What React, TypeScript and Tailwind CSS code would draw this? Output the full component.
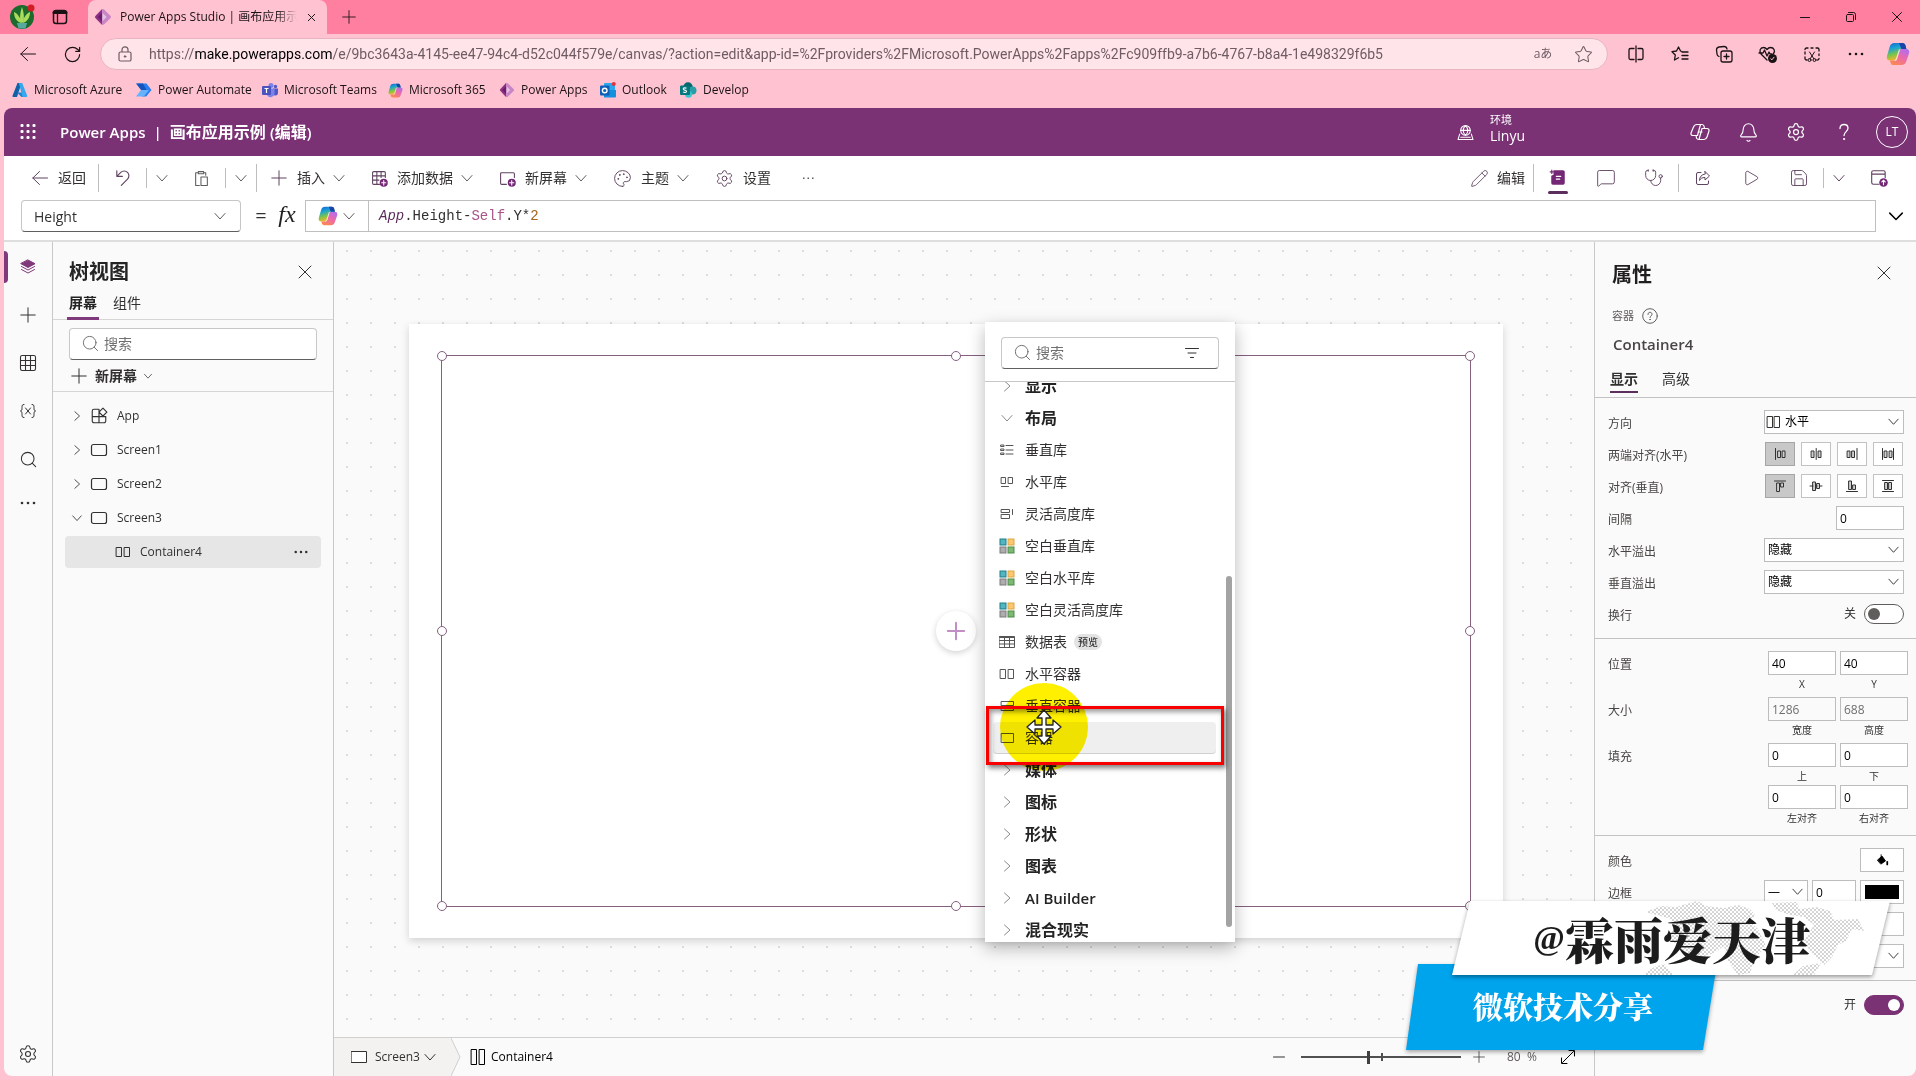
import type { ReactNode } from 'react'
import {
  Bell, Grid3x3, MessageSquare, Palette, Pencil, Play,
  Plus, RotateCw, Save, Search, Settings, Star, Stethoscope, X,
} from 'lucide-react'

/* ---------- small icons ---------- */

function Svg({ size = 16, box = 16, className = '', children }: { size?: number; box?: number; className?: string; children: ReactNode }) {
  return (
    <svg width={size} height={size} viewBox={`0 0 ${box} ${box}`} fill="none" stroke="currentColor" strokeWidth={1}
      strokeLinecap="round" strokeLinejoin="round" className={`shrink-0 ${className}`} aria-hidden="true">
      {children}
    </svg>
  )
}

const ChevDown = ({ size = 14, className = '' }: { size?: number; className?: string }) => (
  <Svg size={size} box={14} className={className}><path d="M2 4.500 7 10l5-5.500" /></Svg>
)
const ChevRight = ({ size = 14, className = '' }: { size?: number; className?: string }) => (
  <Svg size={size} box={14} className={className}><path d="M4.500 2 10 7l-5.500 5" /></Svg>
)
const BackArrow = ({ className = '' }: { className?: string }) => (
  <Svg className={className}><path d="M15.500 8H.8M7.500 1.500.8 8l6.700 6.500" /></Svg>
)
const PlusIcon = ({ size = 16, className = '' }: { size?: number; className?: string }) => (
  <Svg size={size} className={className}><path d="M8 .8v14.400M.8 8h14.400" /></Svg>
)
const Dots = ({ className = '' }: { className?: string }) => (
  <Svg className={className}><g fill="currentColor" stroke="none"><circle cx="2" cy="8" r="1.300" /><circle cx="8" cy="8" r="1.300" /><circle cx="14" cy="8" r="1.300" /></g></Svg>
)
const ScreenIcon = () => <Svg size={18} box={18}><rect x="1.500" y="3.500" width="15" height="11" rx="2" strokeWidth={1.200} /></Svg>
const ColumnsIcon = ({ size = 16 }: { size?: number }) => (
  <Svg size={size}><rect x="1.500" y="3.500" width="5" height="9" /><rect x="9.500" y="3.500" width="5" height="9" /></Svg>
)
const TallColumns = () => <Svg><path d="M1.500.5h5v15h-5zM9.500.5h5v15h-5z" /></Svg>

function CopilotIcon({ size = 16 }: { size?: number }) {
  return (
    <svg width={size} height={size} viewBox="0 0 24 24" className="shrink-0" aria-hidden="true">
      <defs>
        <linearGradient id="cpA" x1="0" y1="0" x2="0.3" y2="1">
          <stop offset="0" stopColor="#1b5fd0" /><stop offset="0.35" stopColor="#16a2d8" /><stop offset="0.7" stopColor="#7fc447" /><stop offset="1" stopColor="#f5b62b" />
        </linearGradient>
        <linearGradient id="cpB" x1="0.8" y1="0" x2="0.2" y2="1">
          <stop offset="0" stopColor="#b06df0" /><stop offset="0.5" stopColor="#ee6aa6" /><stop offset="1" stopColor="#fb8a4c" />
        </linearGradient>
      </defs>
      <path d="M8.500 1h8c1.700 0 2.600 1 3 2.600l.9 3.400h-4.400c-1.500 0-2.400.8-2.800 2.300l-2 7c-.5 1.700-1.400 2.200-3 2.200H4C1.300 18.500.2 16.800 1 14L3.800 4.500C4.500 2.200 6 1 8.500 1z" fill="url(#cpA)" />
      <path d="M15.500 23h-8c-1.700 0-2.600-1-3-2.600l-.6-1.900h4.300c1.600 0 2.500-.5 3-2.200l2-7c.4-1.500 1.300-2.300 2.800-2.300h4c2.700 0 3.800 1.700 3 4.500l-2.800 8C19.500 21.800 18 23 15.500 23z" fill="url(#cpB)" />
      <path d="M13 1h3.500c1.700 0 2.600 1 3 2.600l.9 3.400h-3.600c-1.500 0-1.900-.8-2.300-2.300z" fill="#1a43a8" />
      <path d="M13.500 7.500 10.500 17c-.4 1-.8 1.500-1.800 1.500" fill="none" stroke="#fff" strokeOpacity="0.7" strokeWidth="1.200" />
    </svg>
  )
}

const PowerAppsIcon = ({ size = 17 }: { size?: number }) => (
  <svg width={size} height={size} viewBox="0 0 20 20" className="shrink-0" aria-hidden="true">
    <path d="M9 1 1.500 9a1.500 1.500 0 0 0 0 2L9 19z" fill="#8d2f86" />
    <path d="M9 1v18l2-.6 7.500-7.400a1.500 1.500 0 0 0 0-2L11 1.500z" fill="#c985c5" />
    <path d="M9 5v10l5-5z" fill="#e6bfe6" />
    <path d="M9 5v10l-5-5z" fill="#6b1f69" />
  </svg>
)
const AzureIcon = () => (
  <svg width="16" height="16" viewBox="0 0 16 16" className="shrink-0" aria-hidden="true">
    <path d="M5.500 1h4L5 15H1.500a1 1 0 0 1-1-1.300z" fill="#1161a8" />
    <path d="M5 10.500h7l-1 4.500H9.500z" fill="#1c7fd0" />
    <path d="M6.800 1h3.400l5 12.700A1 1 0 0 1 14.200 15h-3.700z" fill="#35a8ee" />
  </svg>
)
const AutomateIcon = () => (
  <svg width="17" height="16" viewBox="0 0 17 16" className="shrink-0" aria-hidden="true">
    <path d="M1 1.500h10.500L16.500 8l-5.300 6.500H7L10 8 6 3z" fill="#2a7fee" />
    <path d="M1 1.500h7L11.500 8H6z" fill="#1454c0" />
    <path d="M1 14.500 6 8h8l-5.200 6.500z" fill="#66b1fb" />
  </svg>
)
const TeamsIcon = () => (
  <svg width="16" height="16" viewBox="0 0 16 16" className="shrink-0" aria-hidden="true">
    <circle cx="9" cy="3.500" r="2.500" fill="#7b83eb" /><circle cx="13.500" cy="4.500" r="1.700" fill="#5059c9" />
    <path d="M11 6.500h5v4.500a2.600 2.600 0 0 1-5 1z" fill="#5059c9" /><path d="M5 6.500h7.500V12a4 4 0 0 1-7.500 1z" fill="#7b83eb" />
    <rect x="0" y="4" width="9" height="9" rx="1" fill="#4b53bc" /><path d="M2.500 6.500h4M4.500 6.500v4.500" stroke="#fff" strokeWidth="1.200" />
  </svg>
)
const OutlookIcon = () => (
  <svg width="16" height="16" viewBox="0 0 16 16" className="shrink-0" aria-hidden="true">
    <rect x="4" y="1" width="11" height="13" rx="1" fill="#28a8ea" /><path d="M4 8h12v6.500a1 1 0 0 1-1 1H4z" fill="#1490df" />
    <rect x="0" y="3.500" width="9.500" height="10" rx="1" fill="#0f5fb5" /><circle cx="4.700" cy="8.500" r="2.300" fill="none" stroke="#fff" strokeWidth="1.400" />
    <circle cx="13.800" cy="2" r="2" fill="#e0333c" />
  </svg>
)
const SharePointIcon = () => (
  <svg width="17" height="16" viewBox="0 0 17 16" className="shrink-0" aria-hidden="true">
    <circle cx="8" cy="5" r="4.700" fill="#03676c" /><circle cx="12.500" cy="8.500" r="4" fill="#2b9da5" /><circle cx="8.500" cy="12.300" r="3.500" fill="#37c6d0" />
    <rect x="0" y="3.500" width="10" height="9.500" rx="1" fill="#06777d" />
    <path d="M6.500 6.300c-1-.7-3.300-.7-3.300.6 0 1.500 3.300.9 3.300 2.400 0 1.400-2.300 1.400-3.400.6" fill="none" stroke="#fff" strokeWidth="1.100" />
  </svg>
)

/* ---------- browser chrome ---------- */

const bookmarks = [
  { label: 'Microsoft Azure', icon: <AzureIcon />, w: 'w-[123px]' },
  { label: 'Power Automate', icon: <AutomateIcon />, w: 'w-[127px]' },
  { label: 'Microsoft Teams', icon: <TeamsIcon />, w: 'w-[126px]' },
  { label: 'Microsoft 365', icon: <CopilotIcon size={15} />, w: 'w-[111px]' },
  { label: 'Power Apps', icon: <PowerAppsIcon size={16} />, w: 'w-[101px]' },
  { label: 'Outlook', icon: <OutlookIcon />, w: 'w-[80px]' },
  { label: 'Develop', icon: <SharePointIcon />, w: 'w-[80px]' },
]

function IconButton({ label, className = '', children }: { label: string; className?: string; children: ReactNode }) {
  return <button type="button" aria-label={label} className={`flex shrink-0 items-center justify-center ${className}`}>{children}</button>
}

function Browser() {
  return (
    <header className="shrink-0 text-xs text-[#1b1216]">
      <div className="flex h-[34px] items-stretch bg-[#ff7fa0]">
        <IconButton label="个人资料" className="w-11">
          <svg width="26" height="26" viewBox="0 0 26 26" aria-hidden="true">
            <circle cx="13" cy="13" r="12" fill="#1c6b2c" />
            <path d="M13 20C10 15 11 9 13 3c2 6 3 12 0 17zM12 19C7 17 5 13 5 8c4 2 7 6 7 11zM14 19c5-2 7-6 7-11-4 2-7 6-7 11z" fill="#a9dc5c" />
            <path d="M8 19h10l-1.500 5.500h-7z" fill="#56a9a0" /><circle cx="22" cy="4" r="3.500" fill="#d31d24" />
          </svg>
        </IconButton>
        <IconButton label="工作区" className="w-8">
          <Svg><rect x="1.500" y="1.500" width="13" height="13" rx="2.500" strokeWidth={1.500} /><path d="M2 3.500h12" strokeWidth={3} /><path d="M5.500 4v10" strokeWidth={1.300} /></Svg>
        </IconButton>
        <div className="ml-3 flex w-[239px] items-center rounded-t-lg bg-[#ffc2d1] pl-1.5">
          <PowerAppsIcon size={18} />
          <span className="ml-2 w-[177px] overflow-hidden whitespace-nowrap [mask-image:linear-gradient(to_right,black_88%,transparent)]">Power Apps Studio | 画布应用示</span>
          <IconButton label="关闭标签页" className="ml-1.5 size-4"><X size={13} strokeWidth={1.800} /></IconButton>
        </div>
        <IconButton label="新建标签页" className="w-11"><PlusIcon size={14} /></IconButton>
        <div className="ml-auto flex">
          <IconButton label="最小化" className="w-[46px]"><Svg><path d="M3.500 8.500h9" /></Svg></IconButton>
          <IconButton label="还原" className="w-[46px]"><Svg><rect x="3.500" y="5.500" width="7" height="7" rx="1" /><path d="M5.500 3.500h5a2 2 0 0 1 2 2v5" /></Svg></IconButton>
          <IconButton label="关闭" className="w-[46px]"><Svg><path d="m3.500 3.500 9 9m0-9-9 9" /></Svg></IconButton>
        </div>
      </div>

      <div className="flex h-10 items-center">
        <IconButton label="后退" className="w-14"><BackArrow /></IconButton>
        <IconButton label="刷新" className="w-8"><RotateCw size={19} strokeWidth={1.500} /></IconButton>
        <div className="ml-3 flex h-8 min-w-0 flex-1 items-center rounded-full border border-[#e9b4c2] bg-[#ffe4ea] text-[#6f5c63]">
          <span className="ml-4 flex w-4 justify-center"><Svg><path d="M5 6V3.800a3 3 0 0 1 6 0V6M3.500 6h9A1.500 1.500 0 0 1 14 7.500v6a1.500 1.500 0 0 1-1.500 1.500h-9A1.500 1.500 0 0 1 2 13.500v-6A1.500 1.500 0 0 1 3.500 6z" strokeWidth={1.200} /><circle cx="8" cy="10.500" r=".8" fill="currentColor" /></Svg></span>
          <p className="ml-4 min-w-0 flex-1 truncate font-['Roboto','Noto_Sans_CJK_SC',sans-serif] text-sm">
            https://<span className="text-black">make.powerapps.com</span>/e/9bc3643a-4145-ee47-94c4-d52c044f579e/canvas/?action=edit&amp;app-id=%2Fproviders%2FMicrosoft.PowerApps%2Fapps%2Fc909ffb9-a7b6-4767-b8a4-1e498329f6b5
          </p>
          <button type="button" className="w-10 text-xs">aあ</button>
          <IconButton label="收藏" className="w-10"><Star size={19} strokeWidth={1.300} /></IconButton>
          <span className="w-1" />
        </div>
        <IconButton label="分屏" className="ml-1.5 w-11"><Svg size={18} box={18}><path d="M7 3.500H3.500a1.500 1.500 0 0 0-1.500 1.500v8a1.500 1.500 0 0 0 1.500 1.500H7M11 3.500h3.500A1.500 1.500 0 0 1 16 5v8a1.500 1.500 0 0 1-1.500 1.500H11M9 1v16" strokeWidth={1.300} /></Svg></IconButton>
        <IconButton label="收藏夹" className="w-11"><Svg size={18} box={18}><path d="M11 6.500 9.500 6 7.500 2 5.500 6 1 6.700 4.300 10l-.8 5 4-2.300M11 7h6M11 10.500h6M11 14h6" strokeWidth={1.300} /></Svg></IconButton>
        <IconButton label="集锦" className="w-11"><Svg size={18} box={18}><rect x="6" y="6" width="11" height="11" rx="2" strokeWidth={1.300} /><path d="M11.500 9v5M9 11.500h5M4 11.500A3 3 0 0 1 2 9L1.500 5A3 3 0 0 1 4 2l5-.5A3 3 0 0 1 12 4" strokeWidth={1.300} /></Svg></IconButton>
        <IconButton label="浏览器概要" className="w-11"><Svg size={20} box={20}><path d="M9 16 3 10C1 7 2 3.500 5.500 3.500c2 0 3.500 2 3.500 2s1.500-2 3.500-2C16 3.500 17.500 7 15.500 9.500M1 9h4l1.500-3 2.500 6 2-4 1 2h2" strokeWidth={1.300} /><circle cx="14.500" cy="14.500" r="4.500" fill="currentColor" stroke="none" /><path d="m12.800 14.800 1.200 1 2-2.600" stroke="#ffc2d1" /></Svg></IconButton>
        <IconButton label="截图" className="w-11"><Svg size={18} box={18}><path d="M4 15H3.500A1.500 1.500 0 0 1 2 13.500V12M2 9V7M2 4.500A1.500 1.500 0 0 1 3.500 3H5M8 3h2M13 3h1.500A1.500 1.500 0 0 1 16 4.500V6M16 9v1.500M16 13.500a1.500 1.500 0 0 1-1.500 1.500" strokeWidth={1.300} /><path d="m6.500 7 4.500 7M11.500 7 7 14" /><circle cx="6.500" cy="15" r="1.500" /><circle cx="11.500" cy="15" r="1.500" /></Svg></IconButton>
        <IconButton label="更多" className="w-11"><Dots /></IconButton>
        <IconButton label="Copilot" className="mr-1 ml-0.5 w-9"><CopilotIcon size={24} /></IconButton>
      </div>

      <nav className="flex h-[34px] items-center pb-0.5 pl-3">
        {bookmarks.map(b => (
          <a key={b.label} href="#" className={`flex items-center gap-1.5 whitespace-nowrap ${b.w}`}>{b.icon}{b.label}</a>
        ))}
      </nav>
    </header>
  )
}

/* ---------- Power Apps header, command bar, formula bar ---------- */

function SuiteHeader() {
  return (
    <div className="flex h-12 shrink-0 items-center bg-[#7a3275] text-white">
      <IconButton label="应用启动器" className="w-12">
        <svg width="16" height="16" viewBox="0 0 16 16" fill="currentColor" aria-hidden="true">
          {[0, 6, 12].map(y => [0, 6, 12].map(x => <rect key={`${x}-${y}`} x={x + 0.5} y={y} width="3" height="3" rx="1" />))}
        </svg>
      </IconButton>
      <h1 className="ml-2 flex items-center gap-2 text-[15px] font-semibold"><span>Power Apps</span><span>|</span><span className="text-base font-bold">画布应用示例 <span className="text-[15px] font-semibold">(</span>编辑<span className="text-[15px] font-semibold">)</span></span></h1>
      <div className="ml-auto flex items-center">
        <Svg size={17} className="mr-4"><circle cx="8" cy="6" r="4.500" /><path d="M3.500 6h9M8 1.500c-3 3-3 6 0 9 3-3 3-6 0-9zM2.500 9.500 1 14.500h14l-1.500-5M3.500 12.500h9" /></Svg>
        <div className="w-[186px] pb-2">
          <div className="text-[11px] leading-4">环境</div>
          <div className="text-sm leading-4">Linyu</div>
        </div>
        <IconButton label="Copilot" className="w-12"><Svg size={20} box={20}><path d="M7 2.500h5c1 0 1.500.5 2 1.500l.5 2.500H17c1.500 0 2.300 1 2 2.500l-2 6c-.5 1.500-1.500 2.500-3 2.500H8.500c-1 0-1.500-.5-2-1.500L6 13.500H3c-1.500 0-2.300-1-2-2.500l2.500-6C4 3.500 5 2.500 7 2.500zM10.500 2.500l-3 11H6M14.500 6.500H12l-3 11M8 10h4" strokeWidth={1.200} /></Svg></IconButton>
        <IconButton label="通知" className="w-12"><Bell size={21} strokeWidth={1.300} /></IconButton>
        <IconButton label="设置" className="w-12"><Settings size={20} strokeWidth={1.500} /></IconButton>
        <IconButton label="帮助" className="w-12"><Svg size={18} box={18}><path d="M5 5.500C5 3 6.500 1.500 9 1.500s4 1.500 4 3.800c0 3-4 3.700-4 7.200" strokeWidth={1.300} /><circle cx="9" cy="16" r=".6" fill="currentColor" /></Svg></IconButton>
        <button type="button" className="mr-2 ml-2 size-8 rounded-full border border-white text-xs">LT</button>
      </div>
    </div>
  )
}

const Sep = ({ short = false }: { short?: boolean }) => <span className={`w-px shrink-0 bg-[#bdbdbd] ${short ? 'h-5' : 'h-7'}`} />

function CommandBar() {
  return (
    <div className="flex h-11 shrink-0 items-center bg-white text-sm whitespace-nowrap text-[#323130]">
      <button type="button" className="flex w-[94px] shrink-0 items-center gap-2.5 pl-7"><BackArrow className="text-[#5f4360]" />返回</button>
      <Sep />
      <IconButton label="撤消" className="w-[47px] text-[#5f4360]"><Svg size={18}><path d="M2.500 1.500v5h5M2.500 6.500 6 3a4.200 4.200 0 0 1 6 6l-5.500 5.500" /></Svg></IconButton>
      <Sep short />
      <IconButton label="撤消选项" className="w-[30px] text-[#605e5c]"><ChevDown /></IconButton>
      <IconButton label="粘贴" className="w-12 text-[#605e5c]"><Svg size={17}><path d="M5 2.500H2.500v12H6M10 2.500h2V5M5 1.500h5v2H5zM7.500 6.500h6v8h-6z" /></Svg></IconButton>
      <Sep short />
      <IconButton label="粘贴选项" className="w-[30px] text-[#605e5c]"><ChevDown /></IconButton>
      <Sep />
      <div className="flex gap-[25px] pl-3.5">
        <button type="button" className="flex items-center"><PlusIcon className="text-[#5f4360]" /><span className="mr-[7px] ml-2.5">插入</span><ChevDown className="text-[#605e5c]" /></button>
        <button type="button" className="flex items-center">
          <Svg size={17} className="text-[#5f4360]"><path d="M8 13.500H2.500a1 1 0 0 1-1-1v-10a1 1 0 0 1 1-1h10a1 1 0 0 1 1 1V7M1.500 5.500h12M1.500 9.500h6M5.500 1.500v12M9.500 1.500V7" /><circle cx="12" cy="12" r="3.800" fill="#742774" stroke="none" /><path d="M12 10v4M10 12h4" stroke="#fff" /></Svg>
          <span className="mr-[7px] ml-[9px]">添加数据</span><ChevDown className="text-[#605e5c]" />
        </button>
        <button type="button" className="flex items-center">
          <Svg size={17} className="text-[#5f4360]"><path d="M7 13.500H2.500a1 1 0 0 1-1-1v-9a1 1 0 0 1 1-1h11a1 1 0 0 1 1 1V7" /><circle cx="12" cy="12" r="3.800" fill="#742774" stroke="none" /><path d="M12 10v4M10 12h4" stroke="#fff" /></Svg>
          <span className="mr-[7px] ml-[9px]">新屏幕</span><ChevDown className="text-[#605e5c]" />
        </button>
        <button type="button" className="flex items-center"><Palette size={19} strokeWidth={1.200} className="text-[#5f4360]" /><span className="mr-[7px] ml-[9px]">主题</span><ChevDown className="text-[#605e5c]" /></button>
        <button type="button" className="flex items-center"><Settings size={19} strokeWidth={1.200} className="text-[#5f4360]" /><span className="ml-[9px]">设置</span></button>
        <IconButton label="更多命令" className="ml-1 text-[#605e5c]"><Svg><g fill="currentColor" stroke="none"><rect x="3" y="7.500" width="1.500" height="1.500" /><rect x="7.500" y="7.500" width="1.500" height="1.500" /><rect x="12" y="7.500" width="1.500" height="1.500" /></g></Svg></IconButton>
      </div>
      <div className="ml-auto flex items-center text-[#5f4360]">
        <button type="button" className="mr-2 flex items-center gap-2 text-[#323130]"><Pencil size={19} strokeWidth={1.100} className="text-[#5f4360]" />编辑</button>
        <Sep />
        <IconButton label="属性" className="relative h-10 w-12">
          <Svg size={18}><path d="M4 1h8.500A1.500 1.500 0 0 1 14 2.500v10a1.500 1.500 0 0 1-1.500 1.500h-9A1.500 1.500 0 0 1 2 12.500V6l2-1z" fill="#742774" stroke="none" /><path d="M2.500 1v3M1 2.500h3" stroke="#742774" /><path d="M6.500 6.500h4M6.500 9h3" stroke="#fff" /></Svg>
          <span className="absolute bottom-1 h-[3px] w-5 rounded-full bg-[#5c2e5b]" />
        </IconButton>
        <IconButton label="注释" className="w-12"><MessageSquare size={20} strokeWidth={1.100} /></IconButton>
        <IconButton label="应用检查器" className="w-12"><Stethoscope size={20} strokeWidth={1.100} /></IconButton>
        <Sep />
        <IconButton label="共享" className="w-12"><Svg><path d="M6 2.500H3A1.500 1.500 0 0 0 1.500 4v9A1.500 1.500 0 0 0 3 14.500h9a1.500 1.500 0 0 0 1.500-1.500v-2M10 1.500 14.500 6 10 10V7.500C7 7.500 5.500 8.500 4.500 10.500c0-3.500 2-6 5.500-6.500z" /></Svg></IconButton>
        <IconButton label="预览" className="w-12"><Play size={18} strokeWidth={1.200} /></IconButton>
        <IconButton label="保存" className="w-12"><Save size={20} strokeWidth={1.100} /></IconButton>
        <Sep short />
        <IconButton label="保存选项" className="w-[30px]"><ChevDown /></IconButton>
        <IconButton label="发布" className="mr-7 ml-4 w-[18px]"><Svg size={18}><path d="M8 13.500H3A1.500 1.500 0 0 1 1.500 12V3A1.500 1.500 0 0 1 3 1.500h9A1.500 1.500 0 0 1 13.500 3v4.500M1.500 4.500h12" /><circle cx="12" cy="12" r="3.800" fill="#742774" stroke="none" /><path d="M12 14v-4m-1.500 1.500L12 10l1.500 1.500" stroke="#fff" /></Svg></IconButton>
      </div>
    </div>
  )
}

function FormulaBar() {
  return (
    <div className="flex h-[42px] shrink-0 items-start border-b-2 border-[#dedede] bg-white pl-[17px]">
      <div className="relative h-8 w-[220px] shrink-0">
        <select aria-label="属性" className="size-full appearance-none rounded border border-[#c8c6c4] border-b-[#605e5c] bg-white px-3 pt-0.5 text-sm text-[#323130]"><option>Height</option></select>
        <ChevDown className="pointer-events-none absolute top-[9px] right-3.5 text-[#605e5c]" />
      </div>
      <span className="ml-2 w-6 text-center text-xl leading-8 text-[#323130]">=</span>
      <span className="mr-1 w-7 text-center font-['Liberation_Serif',serif] text-2xl leading-7 text-[#201f1e] italic">fx</span>
      <div className="flex h-8 min-w-0 flex-1 items-stretch border border-[#bfbfbf]">
        <button type="button" aria-label="Copilot" className="flex w-[63px] shrink-0 items-center gap-1 border-r border-[#bfbfbf] pl-3 text-[#605e5c]"><CopilotIcon size={20} /><ChevDown /></button>
        <code className="flex items-center pl-2.5 font-['Liberation_Mono',monospace] text-sm text-[#323130]">
          <span className="text-[#5b2a5a] italic">App</span>.Height-<span className="text-[#a8568a]">Self</span>.Y*<span className="text-[#a5631c]">2</span>
        </code>
      </div>
      <IconButton label="展开编辑栏" className="h-8 w-10 text-black"><Svg size={16} box={14}><path d="M1.500 4.500 7 10l5.500-5.500" strokeWidth={1.300} /></Svg></IconButton>
    </div>
  )
}

/* ---------- left side ---------- */

function Rail() {
  return (
    <nav className="flex w-12 shrink-0 flex-col items-center pt-px text-[#323130]">
      <div className="relative flex h-12 w-full items-center justify-center">
        <span className="absolute left-0 h-8 w-1 rounded-r bg-[#80397b]" />
        <button type="button" aria-label="树视图"><Svg><path d="M8 1 15 4.700 8 8.500 1 4.700z" fill="#80397b" stroke="#80397b" /><path d="m1.500 7.500 6.500 3.500 6.500-3.500M1.500 10.500 8 14l6.500-3.500" stroke="#80397b" /></Svg></button>
      </div>
      <IconButton label="插入" className="h-12"><PlusIcon /></IconButton>
      <IconButton label="数据" className="h-12"><Grid3x3 size={20} strokeWidth={1.300} /></IconButton>
      <IconButton label="变量" className="h-12"><Svg><path d="M4 1.500c-2 0-2 1-2 3S2 7.500.5 8C2 8.500 2 9.500 2 11.500s0 3 2 3M12 1.500c2 0 2 1 2 3s0 3 1.500 3.500C14 8.500 14 9.500 14 11.500s0 3-2 3M5.500 5l5 6M10.500 5l-5 6" /></Svg></IconButton>
      <IconButton label="搜索" className="h-12"><Search size={19} strokeWidth={1.300} /></IconButton>
      <IconButton label="更多" className="h-10"><Dots /></IconButton>
      <IconButton label="设置" className="mt-auto h-11"><Settings size={20} strokeWidth={1.300} /></IconButton>
    </nav>
  )
}

const tree = [
  { name: 'App', open: false, app: true },
  { name: 'Screen1', open: false, app: false },
  { name: 'Screen2', open: false, app: false },
  { name: 'Screen3', open: true, app: false },
]

function TreeView() {
  return (
    <aside className="flex w-[282px] shrink-0 flex-col border-x border-[#c8c8c8] text-[#323130]">
      <div className="flex h-14 items-center justify-between px-4 pt-1">
        <h2 className="text-xl font-bold text-[#242424]">树视图</h2>
        <IconButton label="关闭" className="mr-0.5 size-5"><Svg><path d="m2 2 12 12m0-12L2 14" /></Svg></IconButton>
      </div>
      <div className="flex h-[22px] gap-3 border-b border-[#d6d6d6] px-3.5 text-sm">
        <button type="button" className="h-[22px] border-b-[3px] border-[#80397b] px-0.5 pb-3 leading-2.5 font-bold text-[#242424]">屏幕</button>
        <button type="button" className="h-[22px] px-0.5 pb-3 leading-2.5">组件</button>
      </div>
      <div className="relative mx-4 mt-2 h-8">
        <Search size={19} strokeWidth={1.100} className="absolute top-1.5 left-3 text-[#616161]" />
        <input type="text" aria-label="搜索" placeholder="搜索" className="size-full rounded border border-[#c8c8c8] border-b-[#616161] bg-white pb-0.5 pl-[34px] text-sm placeholder:text-[#707070]" />
      </div>
      <button type="button" className="flex h-8 items-center border-b border-[#d6d6d6] pl-[18px] text-sm font-semibold"><PlusIcon /><span className="mr-1.5 ml-2">新屏幕</span><ChevDown size={10} /></button>
      <ul className="pt-[7px] text-xs">
        {tree.map(t => (
          <li key={t.name}>
            <button type="button" className="flex h-[34px] w-full items-center pl-[18px]">
              {t.open ? <ChevDown size={12} /> : <ChevRight size={12} />}
              <span className="mr-[9px] ml-[7px] flex w-[18px]">
                {t.app ? <Svg size={18}><path d="M7.500 2h-4A1.500 1.500 0 0 0 2 3.500v9A1.500 1.500 0 0 0 3.500 14h9a1.500 1.500 0 0 0 1.500-1.500v-4H2M8 2v12M11.500 1 15 4.500 11.500 8 8 4.500z" /></Svg> : <ScreenIcon />}
              </span>
              {t.name}
            </button>
          </li>
        ))}
        <li className="mx-3 mt-px">
          <div className="flex h-8 items-center rounded-sm bg-[#e6e6e6] pr-[13px] pl-[50px]">
            <ColumnsIcon /><span className="ml-[9px] flex-1">Container4</span>
            <IconButton label="更多操作"><Svg size={14}><g fill="currentColor" stroke="none"><circle cx="2" cy="8" r="1.400" /><circle cx="8" cy="8" r="1.400" /><circle cx="14" cy="8" r="1.400" /></g></Svg></IconButton>
          </div>
        </li>
      </ul>
    </aside>
  )
}

/* ---------- canvas ---------- */

const BlankIcon = () => (
  <svg width="16" height="16" viewBox="0 0 16 16" className="shrink-0" aria-hidden="true">
    <rect x="1" y="1" width="6" height="6" fill="#53b5bd" stroke="#1d7f88" /><rect x="9" y="1" width="6" height="6" fill="#fbc86f" stroke="#e0a545" />
    <rect x="1" y="9" width="6" height="6" fill="#adadad" stroke="#7b7b7b" /><rect x="9" y="9" width="6" height="6" fill="#7fb877" stroke="#4b8d43" />
  </svg>
)

const layoutItems: { label: string; icon: ReactNode; preview?: boolean; active?: boolean }[] = [
  { label: '垂直库', icon: <Svg><path d="M2 3h3v1.500H2zM2 7h3v1.500H2zM2 11h3v1.500H2zM7 3.500h7M7 8h7M7 12h7" /></Svg> },
  { label: '水平库', icon: <Svg><path d="M2.500 3.500h4v6h-4zM9.500 3.500h4v6h-4zM2.500 12.500h7" /></Svg> },
  { label: '灵活高度库', icon: <Svg><path d="M2.500 3.500h8v3h-8zM2.500 8.500h8v4h-8zM13.500 3.500v5" /></Svg> },
  { label: '空白垂直库', icon: <BlankIcon /> },
  { label: '空白水平库', icon: <BlankIcon /> },
  { label: '空白灵活高度库', icon: <BlankIcon /> },
  { label: '数据表', icon: <Svg><path d="M.5 2.500h15v11H.5z" /><path d="M.5 3.500h15" /><path d="M.5 6.500h15M.5 10h15M5.500 4v9.500M10.500 4v9.500" /></Svg>, preview: true },
  { label: '水平容器', icon: <ColumnsIcon /> },
  { label: '垂直容器', icon: <Svg><path d="M2.500 3.500h12v4h-12zM2.500 9.500h12v3h-12z" /></Svg> },
  { label: '容器', icon: <Svg><path d="M2.500 3.500h12v9h-12z" /></Svg>, active: true },
]

function Group({ label, open = false, latin = false }: { label: string; open?: boolean; latin?: boolean }) {
  return (
    <button type="button" className={`flex h-8 w-full items-center gap-[11px] pl-[15px] text-[#242424] ${latin ? 'text-[15px] font-semibold' : 'text-base font-bold'}`}>
      {open ? <ChevDown className="text-[#8a8a8a]" /> : <ChevRight className="text-[#8a8a8a]" />}{label}
    </button>
  )
}

function InsertMenu() {
  return (
    <div className="absolute top-20 left-[651px] flex h-[620px] w-[250px] flex-col bg-white shadow-[0_6px_16px_rgba(0,0,0,0.28)]">
      <div className="relative border-b border-[#c8c8c8] p-4 pt-[15px] pb-3">
        <Search size={19} strokeWidth={1.100} className="absolute top-[21px] left-7 text-[#616161]" />
        <input type="text" aria-label="搜索控件" placeholder="搜索" className="h-8 w-full rounded border border-[#c8c8c8] border-b-[#616161] bg-white pb-0.5 pl-[34px] text-sm placeholder:text-[#707070]" />
        <IconButton label="筛选" className="absolute top-[23px] right-[35px] text-[#323130]"><Svg><path d="M1.500 3.500h13M4 8h8M6.500 12.500h3" /></Svg></IconButton>
      </div>
      <div className="min-h-0 flex-1 overflow-hidden">
        <div className="-mt-3">
          <Group label="显示" />
          <Group label="布局" open />
          {layoutItems.map(it => (
            <button type="button" key={it.label} className={`ml-2 flex h-8 w-[223px] items-center pl-1.5 text-sm text-[#323130] ${it.active ? 'rounded-sm border-b border-[#d0d0d0] bg-[#efefef]' : ''}`}>
              <span className="flex text-[#555]">{it.icon}</span><span className="ml-2.5">{it.label}</span>
              {it.preview && <span className="ml-[7px] rounded-full bg-[#e3e3e3] px-1 text-[10px] leading-4 font-medium">预览</span>}
            </button>
          ))}
          <Group label="媒体" />
          <Group label="图标" />
          <Group label="形状" />
          <Group label="图表" />
          <Group label="AI Builder" latin />
          <Group label="混合现实" />
        </div>
      </div>
      <span className="absolute top-[254px] right-[3px] h-[351px] w-1.5 rounded-full bg-[#a3a3a3]" />
      {/* click highlight and callout */}
      <span className="absolute top-[361px] left-[15px] size-[88px] rounded-full bg-[#fff000] mix-blend-multiply" />
      <span className="absolute top-[384px] left-px h-[59px] w-[238px] border-[3px] border-[#f90000] shadow-[2px_3px_5px_rgba(0,0,0,0.5),inset_2px_3px_5px_rgba(0,0,0,0.4)]" />
      <svg width="36" height="36" viewBox="0 0 36 36" className="absolute top-[387px] left-[41px]" aria-hidden="true">
        <path d="m18 1 7 8h-5v7h7v-5l8 7-8 7v-5h-7v7h5l-7 8-7-8h5v-7H9v5l-8-7 8-7v5h7V9h-5z" fill="#fff" stroke="#222" strokeWidth="1.300" strokeLinejoin="round" />
      </svg>
    </div>
  )
}

const handles = [
  '-left-[5px] -top-[5px]', 'left-1/2 -ml-[5px] -top-[5px]', '-right-[5px] -top-[5px]',
  '-left-[5px] top-1/2 -mt-[5px]', '-right-[5px] top-1/2 -mt-[5px]',
  '-left-[5px] -bottom-[5px]', 'left-1/2 -ml-[5px] -bottom-[5px]', '-right-[5px] -bottom-[5px]',
]

function Canvas() {
  return (
    <section className="relative flex min-h-0 flex-1 bg-[#fafafa] bg-[radial-gradient(circle,#dcdcdc_1px,transparent_1.500px)] bg-[size:24px_24px] bg-[position:1px_21px] pt-[82px] pr-[91px] pb-[99px] pl-[75px]">
      <div className="flex flex-1 bg-white px-8 py-[31px] shadow-[0_3px_8px_rgba(0,0,0,0.16)]">
        <div className="relative flex flex-1 items-center justify-center border border-[#84607f]">
          {handles.map(h => <span key={h} className={`absolute size-2.5 rounded-full border border-[#84607f] bg-white ${h}`} />)}
          <IconButton label="添加项" className="size-10 rounded-full bg-white text-[#c38dc6] shadow-[0_2px_6px_rgba(0,0,0,0.18)]"><Plus size={28} strokeWidth={1.700} /></IconButton>
        </div>
      </div>
      <InsertMenu />
    </section>
  )
}

function StatusBar() {
  return (
    <footer className="flex h-[39px] shrink-0 items-center border-t border-[#d0d0d0] bg-[#fafafa] text-xs text-[#323130]">
      <button type="button" className="flex h-full w-[117px] items-center bg-[#f3f2f1] pl-[17px]">
        <Svg><path d="M.5 2.500h15v11H.5z" fill="#fff" /></Svg><span className="ml-2 flex-1 text-left">Screen3</span><ChevDown className="mr-3.5" />
      </button>
      <svg width="10" height="38" viewBox="0 0 10 38" className="shrink-0" aria-hidden="true"><path d="M0 0 9 19 0 38z" fill="#f3f2f1" /><path d="M0 0 9 19 0 38" fill="none" stroke="#cfcfcf" /></svg>
      <span className="ml-[9px] flex items-center gap-[5px] text-black"><TallColumns />Container4</span>
      <div className="ml-auto flex items-center">
        <IconButton label="缩小" className="mr-3.5 w-4"><Svg><path d="M2.500 8h11" /></Svg></IconButton>
        <div className="relative flex w-40 items-center">
          <input type="range" aria-label="缩放" defaultValue={42} className="h-0.5 w-full appearance-none bg-[#505050] [&::-webkit-slider-thumb]:h-[13px] [&::-webkit-slider-thumb]:w-[3px] [&::-webkit-slider-thumb]:appearance-none [&::-webkit-slider-thumb]:bg-[#404040]" />
          <span className="absolute left-20 h-2 w-0.5 bg-[#505050]" />
        </div>
        <IconButton label="放大" className="mr-5 ml-2.5 w-4"><PlusIcon size={12} /></IconButton>
        <span className="w-[53px] text-[#605e5c]">80 &nbsp;%</span>
        <IconButton label="适应窗口" className="mr-[18px] w-4 text-black"><Svg><path d="m2.500 13.500 11-11M9 1.500h5.500V7M1.500 9v5.500H7" /></Svg></IconButton>
      </div>
    </footer>
  )
}

/* ---------- properties ---------- */

const box = 'h-6 border border-[#bdbdbd] bg-white px-[3px] text-xs text-black'

function Row({ label, children, className = 'h-8 pr-3' }: { label: string; children: ReactNode; className?: string }) {
  return (
    <div className={`flex items-start justify-between pl-[13px] ${className}`}>
      <span className="pt-1 text-xs leading-5 text-[#484644]">{label}</span>
      {children}
    </div>
  )
}

function Select({ label, value, icon, className = 'w-[140px]' }: { label: string; value: string; icon?: ReactNode; className?: string }) {
  return (
    <div className={`relative ${className}`}>
      {icon && <span className="absolute top-1 left-0.5">{icon}</span>}
      <select aria-label={label} className={`${box} block w-full appearance-none ${icon ? 'pl-5' : ''}`}><option>{value}</option></select>
      <ChevDown size={13} className="pointer-events-none absolute top-[5px] right-1" />
    </div>
  )
}

function AlignButtons({ items, group }: { items: [string, string][]; group: string }) {
  return (
    <div role="group" aria-label={group} className="flex gap-1.5 pr-px">
      {items.map(([name, d], i) => (
        <IconButton key={name} label={name} className={`h-6 w-[30px] border ${i === 0 ? 'border-[#a6a6a6] bg-[#c8c8c8]' : 'border-[#c2c2c2] bg-white'}`}>
          <Svg size={14} box={14}><path d={d} fill="#d0d0d0" /></Svg>
        </IconButton>
      ))}
    </div>
  )
}

function Field({ label, value, disabled = false }: { label: string; value: string; disabled?: boolean }) {
  return (
    <label className="flex w-[68px] flex-col text-[10px] leading-[18px] text-[#323130]">
      <input type="text" defaultValue={value} disabled={disabled} className={`h-6 border border-[#bdbdbd] px-[3px] text-xs ${disabled ? 'bg-[#fafafa] text-[#6f6f6f]' : 'bg-white text-black'}`} />
      <span className="text-center">{label}</span>
    </label>
  )
}

function Toggle({ label, text, on = false }: { label: string; text: string; on?: boolean }) {
  return (
    <label className="mt-0.5 flex items-center gap-2 text-xs text-[#323130]">
      {text}
      <input type="checkbox" role="switch" aria-label={label} defaultChecked={on} className="peer sr-only" />
      <span className={`flex h-5 w-10 items-center rounded-full border px-[3px] ${on ? 'justify-end border-[#7a3275] bg-[#7a3275]' : 'border-[#605e5c] bg-white'}`}>
        <span className={`size-3 rounded-full ${on ? 'bg-white' : 'bg-[#605e5c]'}`} />
      </span>
    </label>
  )
}

function Properties() {
  return (
    <aside className="flex w-[322px] shrink-0 flex-col border-l border-[#c8c8c8] text-[#323130]">
      <div className="flex h-[62px] items-center justify-between pr-6 pl-[17px]">
        <h2 className="pt-1 text-xl font-bold text-[#201f1e]">属性</h2>
        <IconButton label="关闭" className="size-4"><Svg><path d="m2 2 12 12m0-12L2 14" /></Svg></IconButton>
      </div>
      <div className="flex h-6 items-center gap-2 pl-[17px] text-[11px] text-[#605e5c]">
        容器
        <Svg><circle cx="8" cy="8" r="7.300" /><path d="M6 6.500C6 5 6.800 4.300 8 4.300s2 .8 2 1.900C10 7.800 8 8 8 9.500" /><circle cx="8" cy="11.500" r=".3" /></Svg>
      </div>
      <div className="flex h-9 items-center pb-1 pl-[18px] text-[15px] font-semibold text-[#484644]">Container4</div>
      <div className="flex h-[34px] items-end gap-6 border-b border-[#c2c2c2] pb-1 pl-[15px] text-sm leading-5">
        <button type="button" className="border-b-2 border-[#5c2e5b] pb-0.5 font-bold">显示</button>
        <button type="button" className="pb-1">高级</button>
      </div>

      <div className="border-b border-[#c2c2c2] pt-3 pb-1">
        <Row label="方向"><Select label="方向" value="水平" icon={<Svg><path d="M1.500 2.500h5v11h-5zM8.500 2.500h5v11h-5z" /></Svg>} /></Row>
        <Row label="两端对齐(水平)">
          <AlignButtons group="两端对齐(水平)" items={[
            ['左对齐', 'M2.500 1.500v11M5 4h2.500v6.500H5zM9.500 4H12v6.500H9.500z'],
            ['居中', 'M2.500 4H5v6.500H2.500zM9.500 4H12v6.500H9.500zM7.200 1.500v11'],
            ['右对齐', 'M2.500 4H5v6.500H2.500zM7 4h2.500v6.500H7zM12 1.500v11'],
            ['两端', 'M1.500 1.500v11M12.500 1.500v11M3.500 4H6v6.500H3.500zM8.500 4H11v6.500H8.500z'],
          ]} />
        </Row>
        <Row label="对齐(垂直)">
          <AlignButtons group="对齐(垂直)" items={[
            ['顶部', 'M1.500 2h11M4 4h2.500v8.500H4zM8 4h2.500v4H8z'],
            ['中间', 'M1 7h3M6.500 7H8M10.500 7H13M4 3h2.500v8.500H4zM8 4.500h2.500v5H8z'],
            ['底部', 'M1.500 12.500h11M4 2h2.500v8.500H4zM8 6h2.500v4.500H8z'],
            ['拉伸', 'M1.500 1.500h11M1.500 12.500h11M4 3.500h2.500v7H4zM8 3.500h2.500v7H8z'],
          ]} />
        </Row>
        <Row label="间隔"><input aria-label="间隔" type="text" defaultValue="0" className={`${box} w-[68px]`} /></Row>
        <Row label="水平溢出"><Select label="水平溢出" value="隐藏" /></Row>
        <Row label="垂直溢出"><Select label="垂直溢出" value="隐藏" /></Row>
        <Row label="换行"><Toggle label="换行" text="关" /></Row>
      </div>

      <div className="border-b border-[#c2c2c2] pt-3 pb-1.5">
        <Row label="位置" className="h-[46px] pr-2"><div className="flex gap-1"><Field label="X" value="40" /><Field label="Y" value="40" /></div></Row>
        <Row label="大小" className="h-[46px] pr-2"><div className="flex gap-1"><Field label="宽度" value="1286" disabled /><Field label="高度" value="688" disabled /></div></Row>
        <Row label="填充" className="h-[86px] pr-2">
          <div className="grid grid-cols-2 gap-x-1">
            <Field label="上" value="0" /><Field label="下" value="0" /><Field label="左对齐" value="0" /><Field label="右对齐" value="0" />
          </div>
        </Row>
      </div>

      <div className="border-b border-[#c2c2c2] pt-3 pb-1">
        <Row label="颜色">
          <IconButton label="填充颜色" className="h-6 w-11 border border-[#bdbdbd] bg-white text-black"><Svg size={14}><path d="M7 2v4M3 8l5-4.500L12 9l-5 3.500z" fill="currentColor" /><path d="M14 10v3" strokeWidth={2} /></Svg></IconButton>
        </Row>
        <Row label="边框">
          <div className="flex gap-1">
            <Select label="边框样式" value="—" className="w-11" />
            <input aria-label="边框粗细" type="text" defaultValue="0" className={`${box} w-11`} />
            <button type="button" aria-label="边框颜色" className="flex h-6 w-11 border border-[#bdbdbd] bg-white p-1"><span className="size-full bg-black" /></button>
          </div>
        </Row>
        <Row label=""><input aria-label="圆角半径" type="text" className={`${box} w-[140px]`} /></Row>
        <Row label=""><Select label="投影" value="" /></Row>
      </div>
      <Row label="" className="pt-3 pr-3"><Toggle label="可见" text="开" on /></Row>
    </aside>
  )
}

/* ---------- channel banner ---------- */

function Banner() {
  return (
    <div className="pointer-events-none absolute right-[30px] bottom-[30px] h-[149px] w-[484px]">
      <svg width="484" height="149" viewBox="0 0 484 149" className="absolute inset-0 overflow-visible" aria-hidden="true">
        <defs>
          <pattern id="halftone" width="4" height="4" patternUnits="userSpaceOnUse"><circle cx="1" cy="1" r="1.100" fill="#cfcfcf" /><circle cx="3" cy="3" r="1.100" fill="#cfcfcf" /></pattern>
        </defs>
        <path d="M12 63h299l-14 86H0z" fill="#00a4ec" className="drop-shadow-[0_2px_2px_rgba(0,0,0,0.35)]" />
        <path d="M64 0h420l-18 74H46z" fill="#fff" className="drop-shadow-[0_2px_2px_rgba(0,0,0,0.4)]" />
        <g fill="url(#halftone)">
          <path d="M239 11 255 5 270 6 291 0 300 5 318 7 332 4 344 8 350 15 342 19 352 28 360 45 350 56 344 72 332 74 322 60 318 45 308 52 290 58 277 50 262 36 270 24 262 17z" />
          <path d="M366 2 390 1 394 8 410 6 424 10 428 19 452 18 458 30 446 28 440 40 432 44 426 56 418 64 404 50 398 40 408 24 398 16 384 14 370 9zM239 72 248 66 258 63 268 74H239zM387 74 397 65 415 62 408 74z" />
        </g>
      </svg>
      <p className="relative flex items-center pt-0.5 pl-[127px] font-['Noto_Serif_CJK_SC','Noto_Sans_CJK_SC',serif] text-[49px] leading-[70px] font-black whitespace-nowrap text-[#1c1c1c]"><span className="w-8 text-center font-['Liberation_Serif',serif] text-[34px] leading-[70px]">@</span>霖雨爱天津</p>
      <p className="relative mt-2.5 pl-[67px] font-['Noto_Serif_CJK_SC','Noto_Sans_CJK_SC',serif] text-[30px] leading-[44px] font-black text-white">微软技术分享</p>
    </div>
  )
}

export default function App() {
  return (
    <div className="relative flex h-screen min-h-[900px] flex-col overflow-hidden bg-[#ffc2d1] font-['Open_Sans','Noto_Sans_CJK_SC',sans-serif]">
      <Browser />
      <main className="mx-1 mb-1 flex min-h-0 flex-1 flex-col overflow-hidden rounded-lg bg-[#fafafa]">
        <SuiteHeader />
        <CommandBar />
        <FormulaBar />
        <div className="flex min-h-0 flex-1">
          <Rail />
          <TreeView />
          <div className="flex min-w-0 flex-1 flex-col">
            <Canvas />
            <StatusBar />
          </div>
          <Properties />
        </div>
      </main>
      <Banner />
    </div>
  )
}
